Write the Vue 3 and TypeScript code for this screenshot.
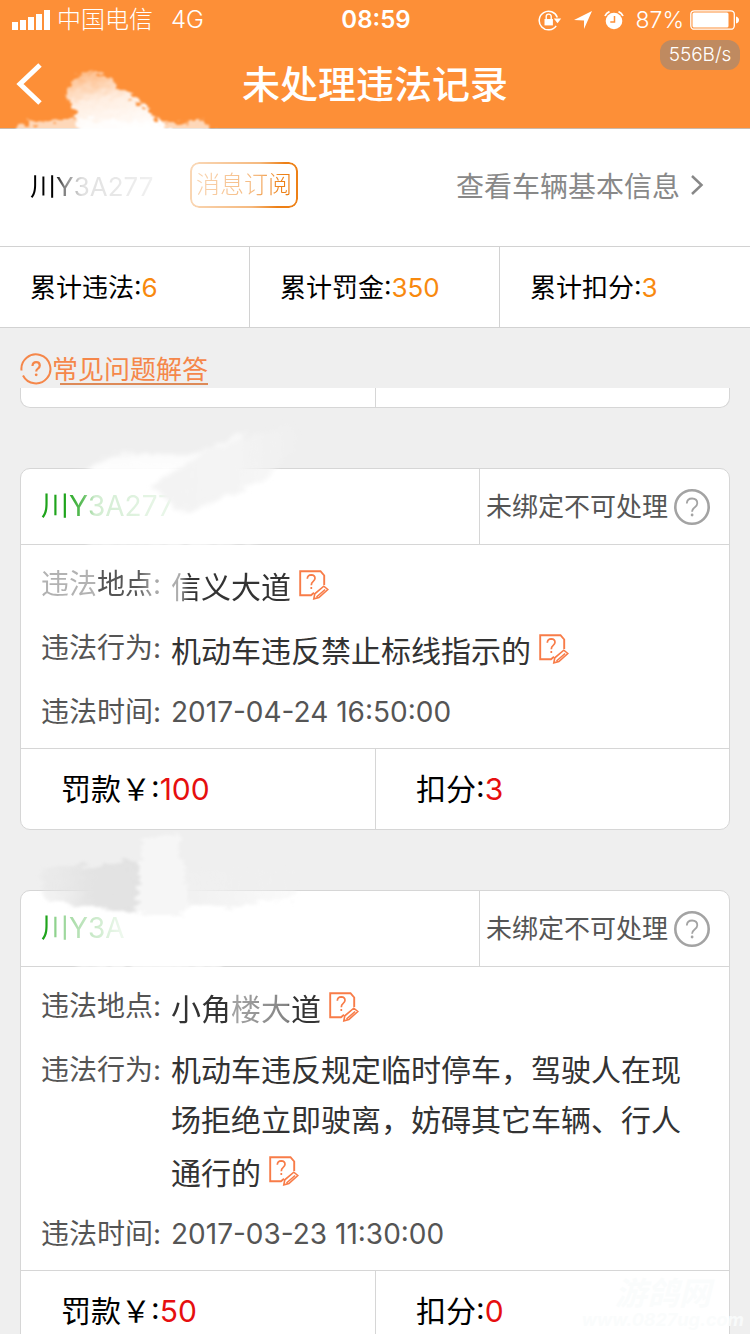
<script setup lang="ts">
interface Stat {
  label: string
  value: number
}

interface Violation {
  plate: string
  status: string
  place: string
  action: string
  time: string
  fine: number
  points: number
}

const stats: Stat[] = [
  { label: '累计违法:', value: 6 },
  { label: '累计罚金:', value: 350 },
  { label: '累计扣分:', value: 3 },
]

const violations: Violation[] = [
  {
    plate: '川Y3A277',
    status: '未绑定不可处理',
    place: '信义大道',
    action: '机动车违反禁止标线指示的',
    time: '2017-04-24 16:50:00',
    fine: 100,
    points: 3,
  },
  {
    plate: '川Y3A',
    status: '未绑定不可处理',
    place: '小角楼大道',
    action: '机动车违反规定临时停车，驾驶人在现场拒绝立即驶离，妨碍其它车辆、行人通行的',
    time: '2017-03-23 11:30:00',
    fine: 50,
    points: 0,
  },
]
</script>

<template>
  <div class="page">
    <header class="top">
      <div class="status">
        <div class="status-side">
          <svg class="signal" viewBox="0 0 38 22" aria-hidden="true">
            <path d="M0 13h6v8H0zM8 11h6v10H8zM16 8h6v13h-6zM24 5h6v16h-6zM32 1h6v20h-6z" fill="#fff" />
          </svg>
          <span class="carrier">中国电信</span>
          <span class="network">4G</span>
        </div>
        <time class="clock">08:59</time>
        <div class="status-side right">
          <svg class="lock" viewBox="0 0 24 22" aria-hidden="true">
            <path d="M18.2 16.8A9.3 9.3 0 1 1 19.3 8.5" fill="none" stroke="#fff" stroke-width="1.5" />
            <path d="M15.8 9.6h7.4l-3.7 4.6z" fill="#fff" />
            <path d="M6.5 10h8.4v6.4H6.5z" fill="#fff" />
            <path d="M8.2 10V7.6a2.5 2.5 0 0 1 5 0V10" fill="none" stroke="#fff" stroke-width="1.4" />
          </svg>
          <svg class="locate" viewBox="0 0 20 20" aria-hidden="true">
            <path d="M19 1 11 19V10.5L1 10z" fill="#fff" />
          </svg>
          <svg class="alarm" viewBox="0 0 20 20" aria-hidden="true">
            <circle cx="10" cy="11" r="8.3" fill="#fff" />
            <path d="M1 6A8 8 0 0 1 5.5 1.6M19 6a8 8 0 0 0-4.500-4.400" fill="none" stroke="#fff" stroke-width="1.8" />
            <path d="M10.500 6v6H6.300" fill="none" stroke="#fd8f37" stroke-width="1.5" />
          </svg>
          <span class="percent">87%</span>
          <svg class="battery" viewBox="0 0 50 20" aria-hidden="true">
            <rect x=".8" y=".8" width="43.500" height="18.400" rx="3.500" fill="none" stroke="#fff" stroke-width="1.300" />
            <rect x="2.500" y="2.600" width="36" height="14.800" rx="1.500" fill="#fff" />
            <path d="M46 6.500q3 1 3 3.500t-3 3.500z" fill="#fff" />
          </svg>
        </div>
      </div>
      <span class="speed">556B/s</span>
      <div class="nav">
        <button class="back" type="button" aria-label="返回">
          <svg viewBox="0 0 26 42" aria-hidden="true">
            <path d="M24 2 4 21l20 19" fill="none" stroke="#fff" stroke-width="5" />
          </svg>
        </button>
        <h1>未处理违法记录</h1>
      </div>
      <svg class="smudge smudge-top" viewBox="0 0 240 64" aria-hidden="true">
        <defs>
          <filter id="rough-top" x="-10%" y="-20%" width="120%" height="140%">
            <feTurbulence type="fractalNoise" baseFrequency=".12 .2" numOctaves="3" seed="4" />
            <feDisplacementMap in="SourceGraphic" scale="16" xChannelSelector="R" yChannelSelector="G" />
            <feGaussianBlur stdDeviation="1" />
          </filter>
          <linearGradient id="fade-top" x1="0" y1="0" x2=".3" y2="1">
            <stop offset="0" stop-color="#fff" stop-opacity=".3" />
            <stop offset=".5" stop-color="#fff" stop-opacity=".85" />
            <stop offset="1" stop-color="#fff" />
          </linearGradient>
        </defs>
        <g filter="url(#rough-top)">
          <path d="M74 40 66 30l6-16 18-9 20 10 30 23 36 34H80z" fill="url(#fade-top)" />
          <path d="m16 64 12-6 48-5 60 4 50 2 16-5 14 14H16z" fill="#fff" fill-opacity=".65" />
        </g>
      </svg>
    </header>

    <section class="vehicle">
      <span class="plate-main">川Y3A277</span>
      <button class="subscribe" type="button">消息订阅</button>
      <a class="info" href="#vehicle">
        查看车辆基本信息
        <svg viewBox="0 0 14 22" aria-hidden="true">
          <path d="m2 2 9.500 9L2 20" fill="none" stroke="#888" stroke-width="2.500" />
        </svg>
      </a>
    </section>

    <section class="stats">
      <div v-for="stat in stats" :key="stat.label" class="stat">
        {{ stat.label }}<b>{{ stat.value }}</b>
      </div>
    </section>

    <a class="faq" href="#faq">
      <svg viewBox="0 0 32 32" aria-hidden="true">
        <path d="M1.500 17.500A14.500 14.500 0 1 1 3 22.500" fill="none" stroke="#f5874a" stroke-width="2" />
        <path d="M12.500 13q.2-3.800 3.700-3.800t3.600 3.400q0 1.800-1.900 3-1.700 1-1.700 3" fill="none" stroke="#f5874a" stroke-width="2.200" />
        <circle cx="16.200" cy="21.800" r="1.400" fill="#f5874a" />
      </svg>
      <span>常见问题解答</span>
    </a>

    <main class="list">
      <div class="tail"><i></i><i></i></div>

      <article v-for="(item, index) in violations" :key="item.time" class="card">
        <div class="head">
          <span class="plate" :class="{ faint: index === 1 }">{{ item.plate }}</span>
          <button class="state" type="button">
            {{ item.status }}
            <svg viewBox="0 0 36 36" aria-hidden="true">
              <circle cx="18" cy="18" r="16.700" fill="none" stroke="#a3a3a3" stroke-width="2.600" />
              <path d="M12.800 14.500q.3-5 5.300-5 5.200.1 5.200 4.700 0 2.300-2.700 4.300-2.500 1.800-2.500 4.300" fill="none" stroke="#a3a3a3" stroke-width="1.800" />
              <circle cx="18.100" cy="26" r="1.400" fill="#a3a3a3" />
            </svg>
          </button>
        </div>
        <dl class="body">
          <div class="row">
            <dt :class="{ rubbed: index === 0 }">违法地点:</dt>
            <dd>
              <span :class="index === 0 ? 'rub-start' : 'rub-middle'">{{ item.place }}</span>
              <button class="note" type="button" aria-label="地点纠错">
                <svg viewBox="0 0 30 30" aria-hidden="true">
                  <path d="M25.200 15V5.500L21.500 1.200H1.200v24H12l3-2.400" fill="none" stroke="#f87c48" stroke-width="1.900" />
                  <path d="M8.300 8.800q.2-4 4-4 3.700.1 3.700 3.500 0 1.800-2 3.300-1.700 1.300-1.700 3.600M12.300 17v2" fill="none" stroke="#f87c48" stroke-width="1.700" />
                  <path d="m14.800 28.800 1-5 9-7.600 4 3.300-8.900 8zM17.500 27l8.600-7.500" fill="none" stroke="#f87c48" stroke-width="1.600" />
                </svg>
              </button>
            </dd>
          </div>
          <div class="row">
            <dt>违法行为:</dt>
            <dd>
              <span>{{ item.action }}</span>
              <button class="note" type="button" aria-label="行为纠错">
                <svg viewBox="0 0 30 30" aria-hidden="true">
                  <path d="M25.200 15V5.500L21.500 1.200H1.200v24H12l3-2.400" fill="none" stroke="#f87c48" stroke-width="1.900" />
                  <path d="M8.300 8.800q.2-4 4-4 3.700.1 3.700 3.500 0 1.800-2 3.300-1.700 1.300-1.700 3.600M12.300 17v2" fill="none" stroke="#f87c48" stroke-width="1.700" />
                  <path d="m14.800 28.800 1-5 9-7.600 4 3.300-8.900 8zM17.500 27l8.600-7.500" fill="none" stroke="#f87c48" stroke-width="1.600" />
                </svg>
              </button>
            </dd>
          </div>
          <div class="row">
            <dt>违法时间:</dt>
            <dd class="time">{{ item.time }}</dd>
          </div>
        </dl>
        <div class="foot">
          <div>罚款￥:<b>{{ item.fine }}</b></div>
          <div>扣分:<b>{{ item.points }}</b></div>
        </div>

        <svg v-if="index === 0" class="smudge smudge-card" viewBox="0 0 320 140" aria-hidden="true">
          <defs>
            <filter id="rough-a" x="-10%" y="-20%" width="120%" height="140%">
              <feTurbulence type="fractalNoise" baseFrequency=".1 .2" numOctaves="3" seed="9" />
              <feDisplacementMap in="SourceGraphic" scale="12" xChannelSelector="R" yChannelSelector="G" />
              <feGaussianBlur stdDeviation="2" />
            </filter>
            <linearGradient id="fade-a" x1="0" y1="0" x2="1" y2="0">
              <stop offset="0" stop-color="#f3f3f3" />
              <stop offset=".6" stop-color="#f4f4f4" />
              <stop offset="1" stop-color="#f1f1f1" stop-opacity=".3" />
            </linearGradient>
            <linearGradient id="fade-white" x1="0" y1="1" x2="0" y2="0">
              <stop offset="0" stop-color="#fff" />
              <stop offset="1" stop-color="#fff" stop-opacity=".5" />
            </linearGradient>
          </defs>
          <g filter="url(#rough-a)">
            <path d="m50 68 45-24 75 2 55-24-20 46z" fill="url(#fade-white)" />
            <path d="m130 76 55-34 85-27 6 20-30 35-60 25-25 10z" fill="url(#fade-a)" />
            <ellipse cx="150" cy="136" rx="90" ry="4" fill="#fff" fill-opacity=".7" />
          </g>
        </svg>
        <svg v-else class="smudge smudge-card" viewBox="0 0 320 140" aria-hidden="true">
          <defs>
            <filter id="rough-b" x="-10%" y="-20%" width="120%" height="140%">
              <feTurbulence type="fractalNoise" baseFrequency=".06 .2" numOctaves="3" seed="2" />
              <feDisplacementMap in="SourceGraphic" scale="16" xChannelSelector="R" yChannelSelector="G" />
              <feGaussianBlur stdDeviation="1.500" />
            </filter>
            <linearGradient id="fade-b" x1="0" y1="0" x2="1" y2="0">
              <stop offset="0" stop-color="#e6e6e6" stop-opacity=".4" />
              <stop offset=".5" stop-color="#e3e3e3" />
              <stop offset="1" stop-color="#e2e2e2" />
            </linearGradient>
            <linearGradient id="fade-c" x1="0" y1="0" x2="1" y2="0">
              <stop offset="0" stop-color="#f0f0f0" />
              <stop offset="1" stop-color="#efefef" stop-opacity=".3" />
            </linearGradient>
          </defs>
          <g filter="url(#rough-b)">
            <path d="m160 40 112-2v28l-60 10-52-4z" fill="url(#fade-c)" />
            <path d="m20 38 105-8-3 54-50-8-50-6z" fill="url(#fade-b)" />
            <path d="m122 8 35-6 10 56-2 26-50-1z" fill="#f6f6f6" />
            <ellipse cx="130" cy="136" rx="75" ry="4" fill="#fff" fill-opacity=".7" />
          </g>
        </svg>
      </article>
    </main>

    <div class="watermark">
      <span>游鸽网</span>
      <span>www.0827ug.com</span>
    </div>
  </div>
</template>

<style>
body {
  margin: 0;
  background: #efefef;
}
</style>

<style scoped>
.page {
  position: relative;
  display: flex;
  flex-direction: column;
  height: 100vh;
  overflow: hidden;
  background: #efefef;
  color: #000;
  font-family: Inter, "Noto Sans CJK SC", sans-serif;
}

button {
  margin: 0;
  padding: 0;
  border: 0;
  background: none;
  color: inherit;
  font: inherit;
}

a {
  color: inherit;
  text-decoration: none;
}

b {
  font-weight: 400;
}

svg {
  display: block;
  flex: none;
}

.top {
  position: relative;
  box-sizing: border-box;
  height: 129px;
  border-bottom: 1px solid #c9b9aa;
  background: #fd8f37;
  color: #fff;
}

.status {
  display: grid;
  grid-template-columns: 1fr auto 1fr;
  align-items: center;
  height: 40px;
  padding: 0 10px 0 12px;
  font-size: 24px;
  line-height: 40px;
}

.status-side {
  display: flex;
  align-items: center;
  font-weight: 300;
}

.status-side.right {
  justify-content: flex-end;
}

.signal {
  width: 38px;
  height: 22px;
  margin-right: 7px;
}

.network {
  margin-left: 18px;
}

.clock {
  font-size: 24px;
  font-weight: 600;
}

.lock {
  width: 24px;
  height: 22px;
  margin-right: 11px;
}

.locate {
  width: 20px;
  height: 20px;
  margin-right: 11px;
}

.alarm {
  width: 20px;
  height: 20px;
  margin-right: 12px;
}

.percent {
  margin-right: 6px;
  font-size: 23px;
}

.battery {
  width: 50px;
  height: 20px;
}

.speed {
  position: absolute;
  top: 40px;
  right: 10px;
  width: 80px;
  border-radius: 12px;
  background: #bf8a60;
  font-size: 19px;
  font-weight: 300;
  line-height: 30px;
  text-align: center;
}

.nav {
  display: grid;
  grid-template-columns: 60px 1fr 60px;
  align-items: center;
  height: 88px;
}

.back {
  padding-left: 16px;
}

.back svg {
  width: 26px;
  height: 42px;
}

h1 {
  margin: 0;
  font-size: 38px;
  font-weight: 500;
  line-height: 88px;
  text-align: center;
}

.smudge {
  position: absolute;
  pointer-events: none;
}

.smudge-top {
  bottom: -1px;
  left: 0;
  width: 240px;
  height: 64px;
}

.smudge-card {
  top: -60px;
  left: 0;
  width: 320px;
  height: 140px;
}

.vehicle {
  display: flex;
  align-items: center;
  box-sizing: border-box;
  height: 118px;
  padding: 0 46px 6px 30px;
  border-bottom: 1px solid #d2d2d2;
  background: #fff;
}

.plate-main {
  width: 160px;
  color: #000;
  font-size: 26px;
  font-weight: 400;
  mask-image: linear-gradient(90deg, #000 24px, rgb(0 0 0 / 50%) 34px, rgb(0 0 0 / 12%) 52px, rgb(0 0 0 / 5%) 130px);
}

.subscribe {
  box-sizing: border-box;
  width: 108px;
  height: 46px;
  border: 2px solid #ed8016;
  border-radius: 9px;
  color: #ed8016;
  font-size: 24px;
  font-weight: 300;
  line-height: 42px;
  mask-image: linear-gradient(100deg, rgb(0 0 0 / 30%) 0, rgb(0 0 0 / 55%) 60%, #000 82%);
}

.info {
  display: flex;
  align-items: center;
  gap: 10px;
  margin-left: auto;
  color: #888;
  font-size: 28px;
}

.info svg {
  width: 14px;
  height: 22px;
}

.stats {
  display: grid;
  grid-template-columns: repeat(3, 1fr);
  border-bottom: 1px solid #d2d2d2;
  background: #fff;
}

.stat {
  padding: 2px 0 0 30px;
  border-right: 1px solid #d2d2d2;
  font-size: 26px;
  line-height: 78px;
}

.stat:last-child {
  border-right: 0;
}

.stat b {
  color: #f8890e;
}

.faq {
  display: flex;
  align-items: center;
  box-sizing: border-box;
  height: 60px;
  padding: 22px 20px 0;
  color: #f5874a;
  font-size: 26px;
}

.faq svg {
  width: 32px;
  height: 32px;
}

.faq span {
  padding-top: 2px;
  line-height: 30px;
  background: linear-gradient(#dd8a58, #dd8a58) right bottom / calc(100% - 8px) 2px no-repeat;
}

.list {
  flex: 1;
  min-height: 0;
  overflow: hidden;
  padding: 0 20px;
}

.tail {
  display: grid;
  grid-template-columns: 1fr 1fr;
  box-sizing: border-box;
  height: 20px;
  border: 1px solid #d6d6d6;
  border-top: 0;
  border-radius: 0 0 10px 10px;
  background: #fff;
}

.tail i:last-child {
  border-left: 1px solid #d6d6d6;
}

.card {
  position: relative;
  margin-top: 60px;
  border: 1px solid #d6d6d6;
  border-radius: 10px;
  background: #fff;
}

.head {
  display: grid;
  grid-template-columns: 1fr 250px;
  height: 75px;
  border-bottom: 1px solid #d6d6d6;
  line-height: 75px;
}

.plate {
  padding-left: 20px;
  color: #1fa41c;
  font-size: 28px;
  mask-image: linear-gradient(90deg, #000 44px, rgb(0 0 0 / 70%) 62px, rgb(0 0 0 / 20%) 74px, rgb(0 0 0 / 10%) 140px);
}

.plate.faint {
  mask-image: linear-gradient(90deg, #000 26px, rgb(0 0 0 / 50%) 34px, rgb(0 0 0 / 30%) 60px, rgb(0 0 0 / 8%) 100px);
}

.state {
  display: flex;
  align-items: center;
  justify-content: space-between;
  padding: 0 19px 0 6px;
  border-left: 1px solid #d6d6d6;
  color: #555;
  font-size: 26px;
}

.state svg {
  width: 36px;
  height: 36px;
}

.body {
  margin: 0;
  padding: 14px 20px 0;
}

.row {
  display: grid;
  grid-template-columns: 130px 1fr;
  padding-bottom: 11px;
  line-height: 50px;
}

dt {
  color: #555;
  font-size: 28px;
}

dd {
  margin: 0;
  padding-right: 20px;
  color: #333;
  font-size: 30px;
}

dd.time {
  color: #555;
  font-size: 28px;
}

.rubbed {
  mask-image: linear-gradient(90deg, rgb(0 0 0 / 45%) 54px, #000 58px, #000 96px, rgb(0 0 0 / 50%) 112px);
}

.rub-start {
  display: inline-block;
  mask-image: linear-gradient(90deg, rgb(0 0 0 / 40%) 8px, #000 18px);
}

.rub-middle {
  display: inline-block;
  mask-image: linear-gradient(90deg, #000 58px, rgb(0 0 0 / 45%) 62px, rgb(0 0 0 / 60%) 116px, #000 121px);
}

.note {
  display: inline-flex;
  margin: 11px 0 0 8px;
  vertical-align: -2px;
}

.note svg {
  width: 30px;
  height: 30px;
}

.foot {
  display: grid;
  grid-template-columns: 1fr 1fr;
  border-top: 1px solid #d6d6d6;
  font-size: 30px;
  line-height: 80px;
}

.foot div {
  padding-left: 40px;
}

.foot div:last-child {
  border-left: 1px solid #d6d6d6;
}

.foot b {
  color: #e60f0f;
}

.watermark {
  position: absolute;
  right: 6px;
  bottom: 4px;
  display: flex;
  flex-direction: column;
  align-items: center;
  color: rgb(250 252 252 / 90%);
  font-size: 18px;
  font-style: italic;
  font-weight: 700;
  line-height: 20px;
  pointer-events: none;
}

.watermark span:first-child {
  font-size: 32px;
  line-height: 32px;
}
</style>
